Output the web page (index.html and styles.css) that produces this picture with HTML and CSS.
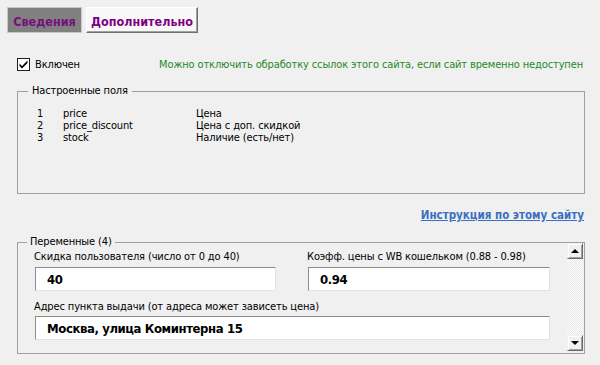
FILE: index.html
```html
<!DOCTYPE html>
<html lang="ru">
<head>
<meta charset="utf-8">
<link rel="stylesheet" href="styles.css">
</head>
<body>
<div class="app">
  <div class="tabs">
    <div class="tab tab-active">Сведения</div>
    <div class="tab">Дополнительно</div>
  </div>

  <div class="enabled-row">
    <label class="check">
      <span class="check-box">
        <svg width="11" height="11" viewBox="0 0 11 11"><path d="M1.5 4.5 L4 7 L9.5 1.5 L9.5 4 L4 9.5 L1.5 7 Z" fill="#000"/></svg>
      </span>
      <span>Включен</span>
    </label>
    <span class="hint">Можно отключить обработку ссылок этого сайта, если сайт временно недоступен</span>
  </div>

  <fieldset class="group group-fields">
    <legend class="group-caption">Настроенные поля</legend>
    <div class="field-table">
      <span>1</span><span>price</span><span>Цена</span>
      <span>2</span><span>price_discount</span><span>Цена с доп. скидкой</span>
      <span>3</span><span>stock</span><span>Наличие (есть/нет)</span>
    </div>
  </fieldset>

  <div class="link-row">
    <a class="link" href="#">Инструкция по этому сайту</a>
  </div>

  <fieldset class="group group-vars">
    <legend class="group-caption">Переменные (4)</legend>
    <div class="vars-body">
      <div class="vars-grid">
        <div class="var">
          <div class="var-label">Скидка пользователя (число от 0 до 40)</div>
          <div class="var-input">40</div>
        </div>
        <div class="var">
          <div class="var-label">Коэфф. цены с WB кошельком (0.88 - 0.98)</div>
          <div class="var-input">0.94</div>
        </div>
        <div class="var var-wide">
          <div class="var-label">Адрес пункта выдачи (от адреса может зависеть цена)</div>
          <div class="var-input var-input-tight">Москва, улица Коминтерна 15</div>
        </div>
      </div>
      <div class="scrollbar">
        <div class="sb-btn"><span class="arrow-up"></span></div>
        <div class="sb-track"></div>
        <div class="sb-btn"><span class="arrow-down"></span></div>
      </div>
    </div>
  </fieldset>
</div>
</body>
</html>
```

FILE: styles.css
```css
html, body {
  margin: 0;
  padding: 0;
  background: #f0f0f0;
}

body {
  font-family: "DejaVu Sans Condensed", "DejaVu Sans", "Liberation Sans", sans-serif;
  font-stretch: condensed;
  font-size: 11px;
  letter-spacing: -0.13px;
  color: #000;
  width: 600px;
  height: 365px;
  overflow: hidden;
}

.app {
  padding-top: 7px;
}

/* Tabs */
.tabs {
  display: flex;
  gap: 4px;
  padding-left: 7px;
}

.tab {
  box-sizing: border-box;
  height: 26px;
  display: flex;
  align-items: center;
  justify-content: center;
  padding-top: 2px;
  font-size: 12.5px;
  font-weight: bold;
  letter-spacing: 0;
  color: #800080;
  width: 112px;
  background: #f8f8f8;
  border: 1px solid;
  border-color: #ffffff #6e6e6e #6e6e6e #ffffff;
  box-shadow: inset -1px -1px 0 #a0a0a0;
}

.tab-active {
  width: 75px;
  background: #808080;
  border-color: #c8c8c8;
  box-shadow: none;
  color: #76107a;
}

/* Enabled row */
.enabled-row {
  display: flex;
  align-items: center;
  justify-content: space-between;
  height: 14px;
  margin-top: 24px;
  padding: 0 17px 0 17px;
}

.check {
  display: flex;
  align-items: center;
  gap: 5px;
}

.check-box {
  box-sizing: border-box;
  width: 13px;
  height: 13px;
  border: 1px solid #1e1e1e;
  background: #fff;
  display: flex;
  align-items: center;
  justify-content: center;
}

.hint {
  color: #1f8a1f;
}

/* Group boxes */
.group {
  margin: 0 15px 0 17px;
  padding: 0;
  border: 1px solid #a0a0a0;
  min-width: 0;
}

.group-caption {
  margin-left: 10px;
  padding: 0 4px;
  line-height: 14px;
  font-size: 11px;
}

.group-fields {
  margin-top: 13px;
  padding: 10px 0 49px 0;
}

.field-table {
  display: grid;
  grid-template-columns: 26px 133px 1fr;
  padding-left: 19px;
  line-height: 12px;
}

/* Link */
.link-row {
  display: flex;
  justify-content: flex-end;
  padding-right: 16px;
  margin-top: 14px;
  line-height: 14px;
}

.link {
  color: #3a6fc2;
  font-weight: bold;
  font-size: 11.5px;
  letter-spacing: 0;
  text-decoration: underline;
}

/* Variables */
.group-vars {
  margin-top: 13px;
  padding: 0;
}

.group-vars .group-caption {
  padding: 0 3px;
  margin-left: 9px;
}

.vars-body {
  display: flex;
}

.vars-grid {
  flex: 1;
  display: grid;
  grid-template-columns: 242px 243px;
  column-gap: 31px;
  row-gap: 9px;
  padding: 1px 0 13px 16px;
}

.var-wide {
  grid-column: 1 / span 2;
}

.var-label {
  line-height: 14px;
  white-space: nowrap;
}

.var-input {
  box-sizing: border-box;
  height: 24px;
  margin-top: 3px;
  margin-left: 1px;
  background: #fff;
  border: 1px solid;
  border-color: #8c8c8c #e3e3e3 #e3e3e3 #8c8c8c;
  display: flex;
  align-items: center;
  padding-left: 11px;
  font-size: 13px;
  font-weight: bold;
  letter-spacing: -0.4px;
}

.var-input-tight {
  margin-top: 2px;
}

/* Scrollbar */
.scrollbar {
  width: 16px;
  margin: -6px 1px 2px 0;
  display: flex;
  flex-direction: column;
}

.sb-btn {
  box-sizing: border-box;
  width: 16px;
  height: 16px;
  background: #f0f0f0;
  border: 1px solid;
  border-color: #f0f0f0 #6a6a6a #6a6a6a #f0f0f0;
  box-shadow: inset 1px 1px 0 #fff, inset -1px -1px 0 #a0a0a0;
  display: flex;
  align-items: center;
  justify-content: center;
}

.sb-track {
  flex: 1;
  background: repeating-conic-gradient(#ffffff 0 25%, #e6e6e6 0 50%) 0 0 / 2px 2px;
}

.arrow-up,
.arrow-down {
  width: 0;
  height: 0;
  border-left: 4px solid transparent;
  border-right: 4px solid transparent;
}

.arrow-up {
  border-bottom: 4px solid #000;
}

.arrow-down {
  border-top: 4px solid #000;
}
```
